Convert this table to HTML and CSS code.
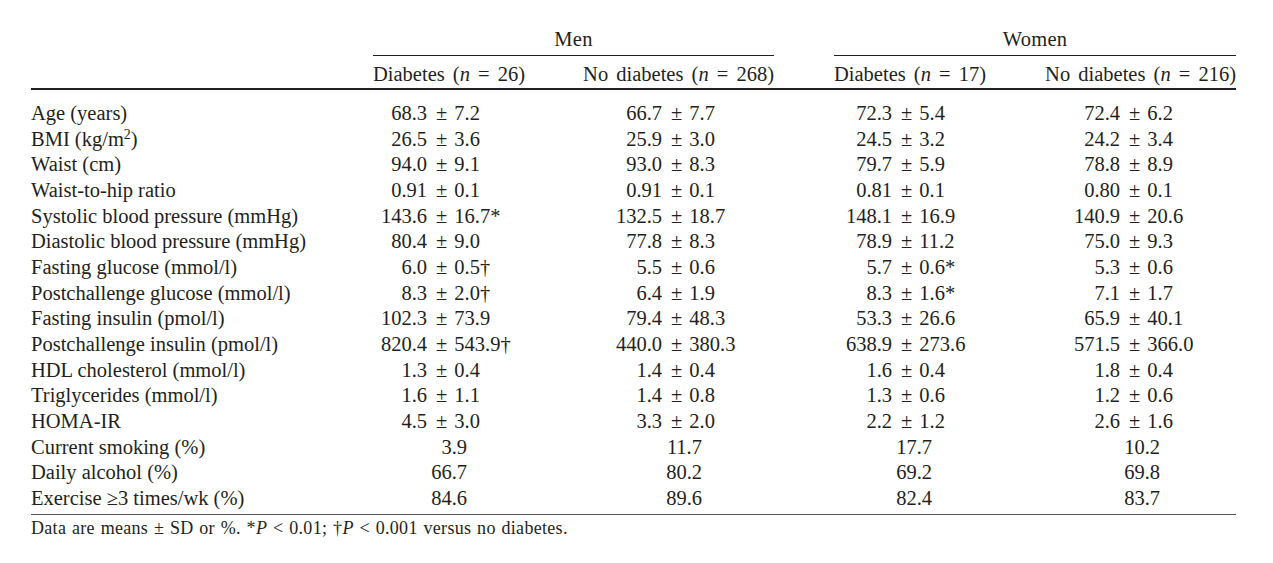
FILE: index.html
```html
<!DOCTYPE html>
<html>
<head>
<meta charset="utf-8">
<link rel="stylesheet" href="styles.css">
</head>
<body>
<div class="page">
<table class="tbl">
  <colgroup>
    <col class="w-label"><col class="w-c1"><col class="w-c2"><col class="w-sp"><col class="w-c3"><col class="w-c4">
  </colgroup>
  <thead>
    <tr class="grp">
      <th></th>
      <th colspan="2" class="grp-h">Men</th>
      <th class="sp"></th>
      <th colspan="2" class="grp-h">Women</th>
    </tr>
    <tr class="sub">
      <th></th>
      <th class="left">Diabetes (<i>n</i> = 26)</th>
      <th class="right">No diabetes (<i>n</i> = 268)</th>
      <th></th>
      <th class="left">Diabetes (<i>n</i> = 17)</th>
      <th class="right">No diabetes (<i>n</i> = 216)</th>
    </tr>
  </thead>
  <tbody>
    <tr class="first">
      <td class="lab">Age (years)</td>
      <td class="c1"><span class="v"><span class="a">68.3</span><span class="pm">±</span><span class="b">7.2</span></span></td>
      <td class="c2"><span class="v"><span class="a">66.7</span><span class="pm">±</span><span class="b">7.7</span></span></td>
      <td></td>
      <td class="c3"><span class="v"><span class="a">72.3</span><span class="pm">±</span><span class="b">5.4</span></span></td>
      <td class="c4"><span class="v"><span class="a">72.4</span><span class="pm">±</span><span class="b">6.2</span></span></td>
    </tr>
    <tr>
      <td class="lab">BMI (kg/m<sup>2</sup>)</td>
      <td class="c1"><span class="v"><span class="a">26.5</span><span class="pm">±</span><span class="b">3.6</span></span></td>
      <td class="c2"><span class="v"><span class="a">25.9</span><span class="pm">±</span><span class="b">3.0</span></span></td>
      <td></td>
      <td class="c3"><span class="v"><span class="a">24.5</span><span class="pm">±</span><span class="b">3.2</span></span></td>
      <td class="c4"><span class="v"><span class="a">24.2</span><span class="pm">±</span><span class="b">3.4</span></span></td>
    </tr>
    <tr>
      <td class="lab">Waist (cm)</td>
      <td class="c1"><span class="v"><span class="a">94.0</span><span class="pm">±</span><span class="b">9.1</span></span></td>
      <td class="c2"><span class="v"><span class="a">93.0</span><span class="pm">±</span><span class="b">8.3</span></span></td>
      <td></td>
      <td class="c3"><span class="v"><span class="a">79.7</span><span class="pm">±</span><span class="b">5.9</span></span></td>
      <td class="c4"><span class="v"><span class="a">78.8</span><span class="pm">±</span><span class="b">8.9</span></span></td>
    </tr>
    <tr>
      <td class="lab">Waist-to-hip ratio</td>
      <td class="c1"><span class="v"><span class="a">0.91</span><span class="pm">±</span><span class="b">0.1</span></span></td>
      <td class="c2"><span class="v"><span class="a">0.91</span><span class="pm">±</span><span class="b">0.1</span></span></td>
      <td></td>
      <td class="c3"><span class="v"><span class="a">0.81</span><span class="pm">±</span><span class="b">0.1</span></span></td>
      <td class="c4"><span class="v"><span class="a">0.80</span><span class="pm">±</span><span class="b">0.1</span></span></td>
    </tr>
    <tr>
      <td class="lab">Systolic blood pressure (mmHg)</td>
      <td class="c1"><span class="v"><span class="a">143.6</span><span class="pm">±</span><span class="b">16.7*</span></span></td>
      <td class="c2"><span class="v"><span class="a">132.5</span><span class="pm">±</span><span class="b">18.7</span></span></td>
      <td></td>
      <td class="c3"><span class="v"><span class="a">148.1</span><span class="pm">±</span><span class="b">16.9</span></span></td>
      <td class="c4"><span class="v"><span class="a">140.9</span><span class="pm">±</span><span class="b">20.6</span></span></td>
    </tr>
    <tr>
      <td class="lab">Diastolic blood pressure (mmHg)</td>
      <td class="c1"><span class="v"><span class="a">80.4</span><span class="pm">±</span><span class="b">9.0</span></span></td>
      <td class="c2"><span class="v"><span class="a">77.8</span><span class="pm">±</span><span class="b">8.3</span></span></td>
      <td></td>
      <td class="c3"><span class="v"><span class="a">78.9</span><span class="pm">±</span><span class="b">11.2</span></span></td>
      <td class="c4"><span class="v"><span class="a">75.0</span><span class="pm">±</span><span class="b">9.3</span></span></td>
    </tr>
    <tr>
      <td class="lab">Fasting glucose (mmol/l)</td>
      <td class="c1"><span class="v"><span class="a">6.0</span><span class="pm">±</span><span class="b">0.5†</span></span></td>
      <td class="c2"><span class="v"><span class="a">5.5</span><span class="pm">±</span><span class="b">0.6</span></span></td>
      <td></td>
      <td class="c3"><span class="v"><span class="a">5.7</span><span class="pm">±</span><span class="b">0.6*</span></span></td>
      <td class="c4"><span class="v"><span class="a">5.3</span><span class="pm">±</span><span class="b">0.6</span></span></td>
    </tr>
    <tr>
      <td class="lab">Postchallenge glucose (mmol/l)</td>
      <td class="c1"><span class="v"><span class="a">8.3</span><span class="pm">±</span><span class="b">2.0†</span></span></td>
      <td class="c2"><span class="v"><span class="a">6.4</span><span class="pm">±</span><span class="b">1.9</span></span></td>
      <td></td>
      <td class="c3"><span class="v"><span class="a">8.3</span><span class="pm">±</span><span class="b">1.6*</span></span></td>
      <td class="c4"><span class="v"><span class="a">7.1</span><span class="pm">±</span><span class="b">1.7</span></span></td>
    </tr>
    <tr>
      <td class="lab">Fasting insulin (pmol/l)</td>
      <td class="c1"><span class="v"><span class="a">102.3</span><span class="pm">±</span><span class="b">73.9</span></span></td>
      <td class="c2"><span class="v"><span class="a">79.4</span><span class="pm">±</span><span class="b">48.3</span></span></td>
      <td></td>
      <td class="c3"><span class="v"><span class="a">53.3</span><span class="pm">±</span><span class="b">26.6</span></span></td>
      <td class="c4"><span class="v"><span class="a">65.9</span><span class="pm">±</span><span class="b">40.1</span></span></td>
    </tr>
    <tr>
      <td class="lab">Postchallenge insulin (pmol/l)</td>
      <td class="c1"><span class="v"><span class="a">820.4</span><span class="pm">±</span><span class="b">543.9†</span></span></td>
      <td class="c2"><span class="v"><span class="a">440.0</span><span class="pm">±</span><span class="b">380.3</span></span></td>
      <td></td>
      <td class="c3"><span class="v"><span class="a">638.9</span><span class="pm">±</span><span class="b">273.6</span></span></td>
      <td class="c4"><span class="v"><span class="a">571.5</span><span class="pm">±</span><span class="b">366.0</span></span></td>
    </tr>
    <tr>
      <td class="lab">HDL cholesterol (mmol/l)</td>
      <td class="c1"><span class="v"><span class="a">1.3</span><span class="pm">±</span><span class="b">0.4</span></span></td>
      <td class="c2"><span class="v"><span class="a">1.4</span><span class="pm">±</span><span class="b">0.4</span></span></td>
      <td></td>
      <td class="c3"><span class="v"><span class="a">1.6</span><span class="pm">±</span><span class="b">0.4</span></span></td>
      <td class="c4"><span class="v"><span class="a">1.8</span><span class="pm">±</span><span class="b">0.4</span></span></td>
    </tr>
    <tr>
      <td class="lab">Triglycerides (mmol/l)</td>
      <td class="c1"><span class="v"><span class="a">1.6</span><span class="pm">±</span><span class="b">1.1</span></span></td>
      <td class="c2"><span class="v"><span class="a">1.4</span><span class="pm">±</span><span class="b">0.8</span></span></td>
      <td></td>
      <td class="c3"><span class="v"><span class="a">1.3</span><span class="pm">±</span><span class="b">0.6</span></span></td>
      <td class="c4"><span class="v"><span class="a">1.2</span><span class="pm">±</span><span class="b">0.6</span></span></td>
    </tr>
    <tr>
      <td class="lab">HOMA-IR</td>
      <td class="c1"><span class="v"><span class="a">4.5</span><span class="pm">±</span><span class="b">3.0</span></span></td>
      <td class="c2"><span class="v"><span class="a">3.3</span><span class="pm">±</span><span class="b">2.0</span></span></td>
      <td></td>
      <td class="c3"><span class="v"><span class="a">2.2</span><span class="pm">±</span><span class="b">1.2</span></span></td>
      <td class="c4"><span class="v"><span class="a">2.6</span><span class="pm">±</span><span class="b">1.6</span></span></td>
    </tr>
    <tr>
      <td class="lab">Current smoking (%)</td>
      <td class="c1"><span class="pct">3.9</span></td>
      <td class="c2"><span class="pct">11.7</span></td>
      <td></td>
      <td class="c3"><span class="pct">17.7</span></td>
      <td class="c4"><span class="pct">10.2</span></td>
    </tr>
    <tr>
      <td class="lab">Daily alcohol (%)</td>
      <td class="c1"><span class="pct">66.7</span></td>
      <td class="c2"><span class="pct">80.2</span></td>
      <td></td>
      <td class="c3"><span class="pct">69.2</span></td>
      <td class="c4"><span class="pct">69.8</span></td>
    </tr>
    <tr class="last">
      <td class="lab">Exercise ≥3 times/wk (%)</td>
      <td class="c1"><span class="pct">84.6</span></td>
      <td class="c2"><span class="pct">89.6</span></td>
      <td></td>
      <td class="c3"><span class="pct">82.4</span></td>
      <td class="c4"><span class="pct">83.7</span></td>
    </tr>
  </tbody>
</table>
<p class="note">Data are means ± SD or %. *<i>P</i> &lt; 0.01; †<i>P</i> &lt; 0.001 versus no diabetes.</p>
</div>
</body>
</html>
```

FILE: styles.css
```css
html, body {
  margin: 0;
  padding: 0;
  background: #ffffff;
}

.page {
  padding: 27px 0 0 31px;
  font-family: "Liberation Serif", "Times New Roman", serif;
  color: #231f20;
}

.tbl {
  border-collapse: collapse;
  table-layout: fixed;
  width: 1205px;
  font-size: 20.5px;
}

.w-label { width: 342px; }
.w-c1 { width: 181px; }
.w-c2 { width: 220px; }
.w-sp { width: 60px; }
.w-c3 { width: 182px; }
.w-c4 { width: 220px; }

.tbl th,
.tbl td {
  padding: 0;
  font-weight: normal;
  white-space: nowrap;
}

.grp th {
  line-height: 24px;
  padding-bottom: 4px;
  text-align: center;
  letter-spacing: 0.3px;
}

.grp .grp-h {
  border-bottom: 1px solid #231f20;
}

.sub th {
  line-height: 24px;
  padding-top: 6px;
  padding-bottom: 2px;
  border-bottom: 2px solid #231f20;
  word-spacing: 3px;
}

.sub .left { text-align: left; }
.sub .right { text-align: right; }

.tbl td {
  line-height: 25.67px;
  height: 25.67px;
}

.first td { padding-top: 11px; }
.last td {
  padding-bottom: 2px;
  border-bottom: 1.5px solid #555;
}

.lab { text-align: left; }

.lab sup {
  font-size: 14px;
  line-height: 0;
  vertical-align: 7px;
}

.v {
  display: flex;
  align-items: baseline;
}

.a {
  display: inline-block;
  width: 54px;
  text-align: right;
}

.pm {
  margin: 0 7px 0 9px;
}

.pct {
  display: inline-block;
  width: 94px;
  text-align: right;
}

.c1 { padding-left: 0; }
.tbl td.c2 { padding-left: 54px; }
.tbl td.c3 { padding-left: 4px; }
.tbl td.c4 { padding-left: 50px; }

.note {
  margin: 3px 0 0 0;
  font-size: 18px;
  line-height: 20px;
  letter-spacing: 0.3px;
  word-spacing: 1px;
}
```
